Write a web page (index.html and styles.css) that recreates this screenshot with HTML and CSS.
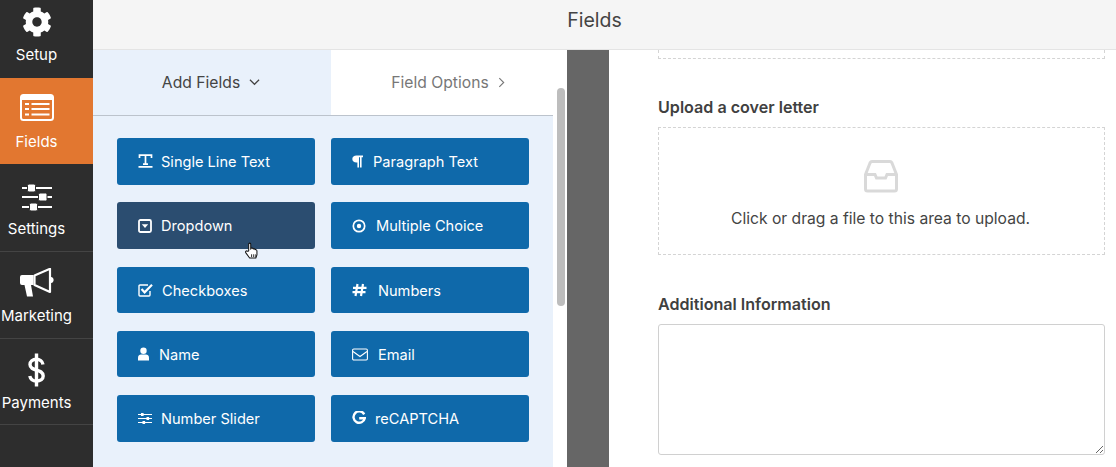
FILE: index.html
```html
<!DOCTYPE html>
<html lang="en">
<head>
<meta charset="utf-8">
<title>Fields</title>
<link rel="stylesheet" href="styles.css">
</head>
<body>
<div class="app">
  <nav class="sidebar">
    <a class="nav-item nav-first">
      <svg class="nav-icon" viewBox="0 0 512 512" width="30" height="30"><path fill="#fff" d="M487.4 315.7l-42.6-24.6c4.3-23.2 4.3-47 0-70.2l42.6-24.6c4.9-2.8 7.1-8.6 5.5-14-11.1-35.6-30-67.8-54.7-94.6-3.8-4.1-10-5.1-14.8-2.3L380.8 110c-17.9-15.4-38.5-27.3-60.8-35.1V25.8c0-5.6-3.9-10.5-9.4-11.7-36.7-8.2-74.3-7.8-109.2 0-5.5 1.2-9.4 6.1-9.4 11.7V75c-22.2 7.9-42.8 19.8-60.8 35.1L88.7 85.5c-4.9-2.8-11-1.9-14.8 2.3-24.7 26.7-43.6 58.9-54.7 94.6-1.7 5.4.6 11.2 5.5 14L67.3 221c-4.3 23.2-4.3 47 0 70.2l-42.6 24.6c-4.9 2.8-7.1 8.6-5.5 14 11.1 35.6 30 67.8 54.7 94.6 3.8 4.1 10 5.1 14.8 2.3l42.6-24.6c17.9 15.4 38.5 27.3 60.8 35.1v49.2c0 5.6 3.9 10.5 9.4 11.7 36.7 8.2 74.3 7.8 109.2 0 5.5-1.2 9.4-6.1 9.4-11.7v-49.2c22.2-7.9 42.8-19.8 60.8-35.1l42.6 24.6c4.9 2.8 11 1.9 14.8-2.3 24.7-26.7 43.6-58.9 54.7-94.6 1.5-5.5-.7-11.3-5.6-14.1zM256 336c-44.1 0-80-35.9-80-80s35.9-80 80-80 80 35.9 80 80-35.9 80-80 80z"/></svg>
      <span class="nav-label">Setup</span>
    </a>
    <a class="nav-item nav-active">
      <svg class="nav-icon" viewBox="0 0 34 30" width="34" height="30"><rect x="1" y="1" width="32" height="25" rx="2.500" fill="none" stroke="#fff" stroke-width="2"/><rect x="1" y="1" width="32" height="5" fill="#fff"/><path d="M5 10h4M11.500 10h18M5 15h4M11.500 15h18M5 20.500h4M11.500 20.500h18" stroke="#fff" stroke-width="2"/></svg>
      <span class="nav-label">Fields</span>
    </a>
    <a class="nav-item nav-settings">
      <svg class="nav-icon nav-icon-low" viewBox="0 0 30 30" width="30" height="30"><path d="M0 7h30M0 16h30M0 26h30" stroke="#fff" stroke-width="2"/><rect x="5.500" y="3" width="8" height="8" rx="1.500" fill="#fff" stroke="#2d2d2d"/><rect x="16.500" y="12" width="8.500" height="8" rx="1.500" fill="#fff" stroke="#2d2d2d"/><rect x="7.500" y="22" width="8" height="8" rx="1.500" fill="#fff" stroke="#2d2d2d"/></svg>
      <span class="nav-label">Settings</span>
    </a>
    <a class="nav-item">
      <svg class="nav-icon" viewBox="0 0 34 30" width="34" height="30"><path fill="#fff" d="M0 9a2 2 0 0 1 2-2h11.500v10H11l2 11.500H7L4.500 17H2a2 2 0 0 1-2-2z"/><path d="M14.500 7.500L30 .8V24L14.500 17z" fill="none" stroke="#fff" stroke-width="2.200" stroke-linejoin="round"/><path d="M31 9c3.500 0 3.500 6 0 6z" fill="#fff"/></svg>
      <span class="nav-label">Marketing</span>
    </a>
    <a class="nav-item nav-payments">
      <svg class="nav-dollar" viewBox="0 0 17 34" width="17" height="34"><path d="M15 11.500C14.500 8 11.500 6.300 8.500 6.300 4.500 6.300 2 8.500 2 11.500c0 7.500 13.200 3.500 13.200 11.500 0 3-2.700 5-6.700 5-3.500 0-6-1.500-6.700-5" fill="none" stroke="#fff" stroke-width="3.400"/><path d="M8.500 .5v33" stroke="#fff" stroke-width="3.400"/></svg>
      <span class="nav-label">Payments</span>
    </a>
  </nav>
  <div class="main">
    <header class="topbar">Fields</header>
    <div class="content">
      <section class="panel">
        <div class="tabs">
          <div class="tab tab-add">Add Fields
            <svg viewBox="0 0 12 8" width="11" height="8"><path d="M1 1.500l5 5 5-5" fill="none" stroke="#444" stroke-width="1.300"/></svg>
          </div>
          <div class="tab tab-options">Field Options
            <svg viewBox="0 0 8 12" width="7" height="11"><path d="M1.500 1l5 5-5 5" fill="none" stroke="#777" stroke-width="1.300"/></svg>
          </div>
        </div>
        <div class="grid">
          <button class="field-btn">
            <svg class="fi" viewBox="0 0 15 14" width="15" height="14"><path d="M1.500 4V1.200h12V4M7.500 1.200V10M5 10.200h5M.5 12.800h14" fill="none" stroke="#fff" stroke-width="1.700"/></svg>
            <span class="gap-a">Single Line Text</span>
          </button>
          <button class="field-btn">
            <svg class="fi-small" viewBox="0 0 11 13" width="11" height="13"><path fill="#fff" d="M4.500 0.500H11V2.200H9.600V12.500H8V2.200H7V12.500H5.400V7.600H4.500C2 7.600 0.300 6 0.300 4S2 .5 4.500 .5z"/></svg>
            <span class="gap-b">Paragraph Text</span>
          </button>
          <button class="field-btn field-btn-hover">
            <svg class="fi" viewBox="0 0 14 14" width="14" height="14"><rect x="1" y="1" width="12" height="12" rx="1.500" fill="none" stroke="#fff" stroke-width="1.800"/><path d="M3.800 5.200h6.400L7 9z" fill="#fff"/></svg>
            <span class="gap-a2">Dropdown</span>
            <svg class="hand" viewBox="0 0 16 19" width="15" height="18"><path d="M5 9.500V2.300c0-1.600 2.200-1.600 2.200 0V7.500l.4-1c1.600-.3 2 0 2.200.8.900-.5 1.900-.2 2 .8 1-.3 2 .2 2 1.400v4.200l-1.200 3.300H6L2 11.500c-1-1.500.7-2.800 1.800-1.700z" fill="#fff" stroke="#111" stroke-width="1.100" stroke-linejoin="round"/><path d="M8 13v3M10 13v3M12 13v3" stroke="#333"/></svg>
          </button>
          <button class="field-btn">
            <svg class="fi" viewBox="0 0 14 14" width="14" height="14"><circle cx="7" cy="7" r="5.700" fill="none" stroke="#fff" stroke-width="1.700"/><circle cx="7" cy="7" r="2.200" fill="#fff"/></svg>
            <span class="gap-c">Multiple Choice</span>
          </button>
          <button class="field-btn">
            <svg class="fi" viewBox="0 0 15 14" width="15" height="14"><path d="M12 8v4a1 1 0 0 1-1 1H2a1 1 0 0 1-1-1V3a1 1 0 0 1 1-1h8" fill="none" stroke="#fff" stroke-width="1.400"/><path d="M3.500 6L6.600 9.300 14 1.800" fill="none" stroke="#fff" stroke-width="2.200"/></svg>
            <span class="gap-d">Checkboxes</span>
          </button>
          <button class="field-btn">
            <svg class="fi" viewBox="0 0 15 14" width="15" height="14"><path d="M5.500 1L3.500 13M11 1L9 13M1 4.800h13.500M.5 9.200H13.500" fill="none" stroke="#fff" stroke-width="2.200"/></svg>
            <span class="gap-e">Numbers</span>
          </button>
          <button class="field-btn">
            <svg class="fi-small" viewBox="0 0 11 14" width="11" height="14"><circle cx="5.500" cy="3.800" r="3.200" fill="#fff"/><path d="M0 13.500V10.500C0 8.500 1.500 7.500 3 7.500h5c1.500 0 3 1 3 3v3z" fill="#fff"/></svg>
            <span class="gap-f">Name</span>
          </button>
          <button class="field-btn">
            <svg class="fi" viewBox="0 0 16 13" width="16" height="13"><rect x=".6" y="1" width="14.800" height="11" rx="1.200" fill="none" stroke="#fff" stroke-width="1.100"/><path d="M1 3.500L8 8.500l7-5" fill="none" stroke="#fff" stroke-width="1.100"/></svg>
            <span class="gap-f">Email</span>
          </button>
          <button class="field-btn">
            <svg class="fi" viewBox="0 0 14 13" width="14" height="13"><path d="M0 2.500h14M0 6.500h14M0 10.500h14" stroke="#fff" stroke-width="1"/><rect x="3" y="1" width="2.600" height="3" fill="#fff"/><rect x="8.500" y="5" width="2.600" height="3" fill="#fff"/><rect x="4.500" y="9" width="2.600" height="3" fill="#fff"/></svg>
            <span class="gap-a1">Number Slider</span>
          </button>
          <button class="field-btn">
            <svg class="fi" viewBox="0 0 14 14" width="14" height="14"><path d="M12.200 3.300A5.700 5.700 0 1 0 12.800 7.200H7.200" fill="none" stroke="#fff" stroke-width="2.400"/></svg>
            <span class="gap-g">reCAPTCHA</span>
          </button>
        </div>
      </section>
      <div class="scrollbar"><div class="scroll-thumb"></div></div>
      <div class="strip"></div>
      <section class="form">
        <div class="drop-remnant"></div>
        <label class="field-label label-upload">Upload a cover letter</label>
        <div class="drop">
          <svg viewBox="0 0 36 36" width="36" height="36"><path d="M9 3.500h18c1 0 1.500.5 2 1.500l4.500 11.500V31a2 2 0 0 1-2 2h-27a2 2 0 0 1-2-2V16.500L7 5c.5-1 1-1.500 2-1.500z" fill="none" stroke="#d9d9d9" stroke-width="3"/><path d="M3 16.500h9l1.500 3.500h9L24 16.500h9" fill="none" stroke="#d9d9d9" stroke-width="3"/></svg>
          <p class="drop-text">Click or drag a file to this area to upload.</p>
        </div>
        <label class="field-label label-info">Additional Information</label>
        <textarea class="textarea"></textarea>
      </section>
    </div>
  </div>
</div>
</body>
</html>
```

FILE: styles.css
```css
* { box-sizing: border-box; }
html, body { margin: 0; height: 100%; overflow: hidden; background: #fff; }
body { font-family: Inter, "Liberation Sans", sans-serif; color: #444; }

.app { display: flex; height: 467px; }

.sidebar { width: 93px; flex: none; background: #2d2d2d; }
.nav-item {
  display: flex; flex-direction: column; align-items: center;
  height: 87px; padding: 16px 20px 0 0; color: #fff;
  border-bottom: 1px solid #444;
}
.nav-first { height: 78px; padding-top: 7px; border-bottom: 0; }
.nav-active { height: 86px; background: #e27730; border-bottom: 0; }
.nav-settings { height: 88px; }
.nav-payments { height: 86px; }
.nav-icon { display: block; flex: none; }
.nav-icon-low { margin-top: 1px; }
.nav-label { margin-top: 10px; font-size: 15px; line-height: 16px; white-space: nowrap; }
.nav-dollar { display: block; flex: none; margin: -2px 0 -2px; }

.main { flex: 1; min-width: 0; display: flex; flex-direction: column; }
.topbar {
  height: 50px; flex: none; background: #f5f5f5; border-bottom: 1px solid #e4e4e4;
  display: flex; align-items: center; justify-content: center;
  font-size: 19.500px; color: #444; padding: 0 20px 9px 0;
}
.content { flex: 1; min-height: 0; display: flex; }

.panel { width: 460px; flex: none; background: #e9f1fb; }
.tabs { display: flex; height: 66px; border-bottom: 1px solid #bcc3cc; }
.tab {
  display: flex; align-items: center; justify-content: center; gap: 9px;
  font-size: 15.700px; padding-bottom: 1px;
}
.tab-add { width: 238px; color: #444; padding-right: 2px; }
.tab-options { width: 222px; background: #fff; color: #777; padding-left: 12px; }

.grid {
  display: grid; grid-template-columns: 198px 198px; column-gap: 16px;
  grid-auto-rows: 46.500px; row-gap: 17.800px;
  padding: 22px 0 0 24px;
}
.field-btn {
  position: relative;
  display: flex; align-items: center; padding: 0 0 0 21px;
  border: 0; border-radius: 3px; background: #0f69aa; color: #fff;
  font-family: Inter, "Liberation Sans", sans-serif; font-size: 14.600px; line-height: 18px; text-align: left;
}
.field-btn span { position: relative; top: .7px; }
.field-btn-hover { background: #2b4d70; }
.fi, .fi-small { flex: none; display: block; }
.gap-a { margin-left: 8px; }
.gap-a1 { margin-left: 9px; }
.gap-a2 { margin-left: 9px; }
.gap-b { margin-left: 10px; }
.gap-c { margin-left: 10px; }
.gap-d { margin-left: 9px; }
.gap-e { margin-left: 11px; }
.gap-f { margin-left: 10px; }
.gap-g { margin-left: 9px; }
.hand { position: absolute; left: 127px; top: 40px; z-index: 2; }

.scrollbar { width: 14px; flex: none; background: #fff; padding: 38px 2px 0 4px; }
.scroll-thumb { height: 218px; border-radius: 4px; background: #bdbdbd; }
.strip { width: 42px; flex: none; background: #666; }

.form { flex: 1; min-width: 0; padding: 0 11px 0 49px; background: #fff; }
.drop-remnant { height: 9px; border: 1px dashed #d4d4d4; border-top: 0; }
.field-label { display: block; font-size: 16.100px; font-weight: 600; line-height: 20px; color: #404040; }
.label-upload { margin-top: 38px; }
.label-info { margin-top: 39px; }
.drop {
  height: 128px; margin-top: 10px; border: 1px dashed #d4d4d4;
  display: flex; flex-direction: column; align-items: center; padding: 30px 2px 0 0;
}
.drop-text { margin: 15px 0 0; font-size: 15.650px; line-height: 20px; color: #444; }
.textarea {
  display: block; width: 100%; height: 131px; margin-top: 10px;
  border: 1px solid #d0d0d0; border-radius: 3px; background: #fff; outline: 0;
}
```
